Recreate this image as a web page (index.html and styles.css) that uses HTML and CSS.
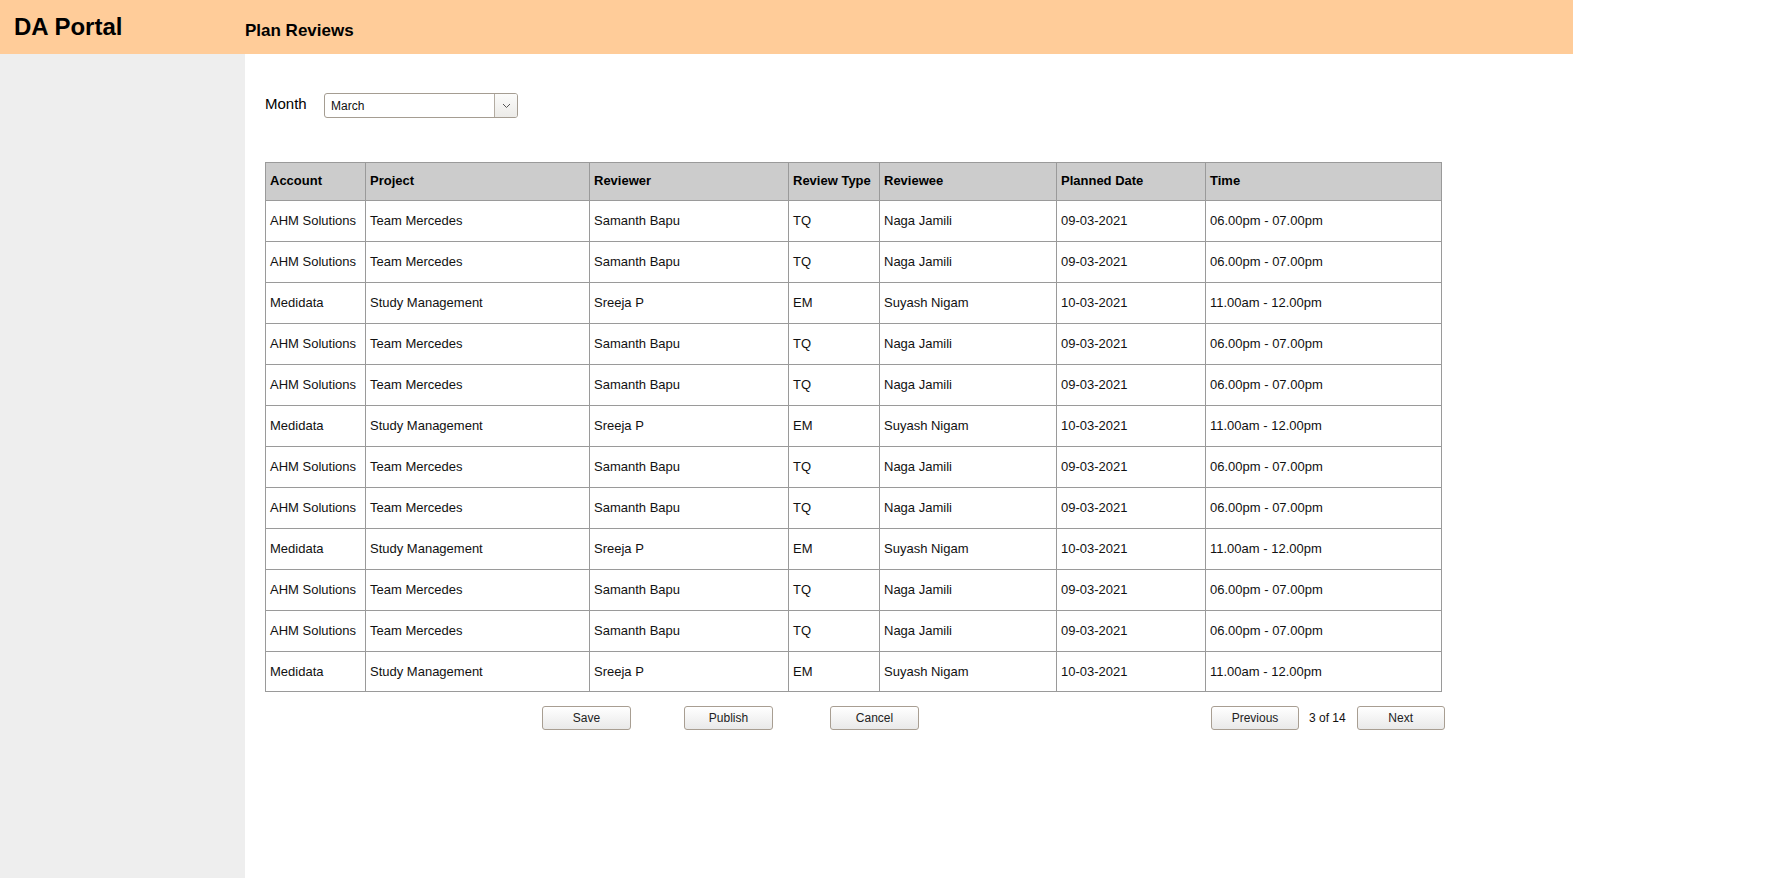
FILE: index.html
```html
<!DOCTYPE html>
<html>
<head>
<meta charset="utf-8">
<title>DA Portal - Plan Reviews</title>
<link rel="stylesheet" href="styles.css">
</head>
<body>
<header class="topbar">
  <div class="brand">DA Portal</div>
  <div class="page-title">Plan Reviews</div>
</header>
<div class="layout">
  <aside class="sidebar"></aside>
  <main class="content">
    <div class="filter-row">
      <span class="filter-label">Month</span>
      <div class="select">
        <span class="select-value">March</span>
        <span class="select-btn">
          <svg width="9" height="6" viewBox="0 0 9 6"><path d="M1 1 L4.5 4.5 L8 1" fill="none" stroke="#555" stroke-width="1"/></svg>
        </span>
      </div>
    </div>
    <table class="grid">
      <colgroup>
        <col class="c1"><col class="c2"><col class="c3"><col class="c4"><col class="c5"><col class="c6"><col class="c7">
      </colgroup>
      <thead>
        <tr class="head">
          <th>Account</th><th>Project</th><th>Reviewer</th><th>Review Type</th><th>Reviewee</th><th>Planned Date</th><th>Time</th>
        </tr>
      </thead>
      <tbody>
        <tr><td>AHM Solutions</td><td>Team Mercedes</td><td>Samanth Bapu</td><td>TQ</td><td>Naga Jamili</td><td>09-03-2021</td><td>06.00pm - 07.00pm</td></tr>
        <tr><td>AHM Solutions</td><td>Team Mercedes</td><td>Samanth Bapu</td><td>TQ</td><td>Naga Jamili</td><td>09-03-2021</td><td>06.00pm - 07.00pm</td></tr>
        <tr><td>Medidata</td><td>Study Management</td><td>Sreeja P</td><td>EM</td><td>Suyash Nigam</td><td>10-03-2021</td><td>11.00am - 12.00pm</td></tr>
        <tr><td>AHM Solutions</td><td>Team Mercedes</td><td>Samanth Bapu</td><td>TQ</td><td>Naga Jamili</td><td>09-03-2021</td><td>06.00pm - 07.00pm</td></tr>
        <tr><td>AHM Solutions</td><td>Team Mercedes</td><td>Samanth Bapu</td><td>TQ</td><td>Naga Jamili</td><td>09-03-2021</td><td>06.00pm - 07.00pm</td></tr>
        <tr><td>Medidata</td><td>Study Management</td><td>Sreeja P</td><td>EM</td><td>Suyash Nigam</td><td>10-03-2021</td><td>11.00am - 12.00pm</td></tr>
        <tr><td>AHM Solutions</td><td>Team Mercedes</td><td>Samanth Bapu</td><td>TQ</td><td>Naga Jamili</td><td>09-03-2021</td><td>06.00pm - 07.00pm</td></tr>
        <tr><td>AHM Solutions</td><td>Team Mercedes</td><td>Samanth Bapu</td><td>TQ</td><td>Naga Jamili</td><td>09-03-2021</td><td>06.00pm - 07.00pm</td></tr>
        <tr><td>Medidata</td><td>Study Management</td><td>Sreeja P</td><td>EM</td><td>Suyash Nigam</td><td>10-03-2021</td><td>11.00am - 12.00pm</td></tr>
        <tr><td>AHM Solutions</td><td>Team Mercedes</td><td>Samanth Bapu</td><td>TQ</td><td>Naga Jamili</td><td>09-03-2021</td><td>06.00pm - 07.00pm</td></tr>
        <tr><td>AHM Solutions</td><td>Team Mercedes</td><td>Samanth Bapu</td><td>TQ</td><td>Naga Jamili</td><td>09-03-2021</td><td>06.00pm - 07.00pm</td></tr>
        <tr class="last"><td>Medidata</td><td>Study Management</td><td>Sreeja P</td><td>EM</td><td>Suyash Nigam</td><td>10-03-2021</td><td>11.00am - 12.00pm</td></tr>
      </tbody>
    </table>
    <div class="actions">
      <button class="btn btn-save">Save</button>
      <button class="btn btn-publish">Publish</button>
      <button class="btn btn-cancel">Cancel</button>
      <button class="btn btn-prev">Previous</button>
      <span class="pager">3 of 14</span>
      <button class="btn btn-next">Next</button>
    </div>
  </main>
</div>
</body>
</html>
```
FILE: styles.css
```css
* { box-sizing: border-box; }
html, body {
  margin: 0;
  padding: 0;
  background: #fff;
  font-family: "Liberation Sans", Arial, sans-serif;
  color: #000;
}
.topbar {
  width: 1573px;
  height: 54px;
  background: #ffcc99;
  display: flex;
  align-items: flex-start;
}
.brand {
  width: 245px;
  padding-left: 14px;
  padding-top: 13px;
  font-size: 24px;
  font-weight: bold;
  line-height: 28px;
}
.page-title {
  padding-top: 21px;
  font-size: 17px;
  font-weight: bold;
  line-height: 20px;
}
.layout {
  display: flex;
  height: 824px;
}
.sidebar {
  width: 245px;
  flex: none;
  background: #eeeeee;
}
.content {
  flex: 1;
  padding-left: 20px;
  padding-top: 39px;
}
.filter-row {
  display: flex;
  align-items: center;
  height: 25px;
}
.filter-label {
  font-size: 15px;
  width: 59px;
  line-height: 18px;
  position: relative;
  top: -2px;
}
.select {
  width: 194px;
  height: 25px;
  border: 1px solid #a59d92;
  border-radius: 3px;
  background: #fff;
  display: flex;
  align-items: center;
}
.select-value {
  flex: 1;
  font-size: 12px;
  padding-left: 6px;
  padding-top: 1px;
  color: #111;
}
.select-btn {
  width: 23px;
  height: 23px;
  border-left: 1px solid #b3aca2;
  background: linear-gradient(#fbfbfa, #ecebe8);
  border-radius: 0 2px 2px 0;
  display: flex;
  align-items: center;
  justify-content: center;
}
.grid {
  margin-top: 44px;
  width: 1177px;
  table-layout: fixed;
  border-collapse: collapse;
  font-size: 13px;
}
.c1 { width: 100px; }
.c2 { width: 224px; }
.c3 { width: 199px; }
.c4 { width: 91px; }
.c5 { width: 177px; }
.c6 { width: 149px; }
.c7 { width: 236px; }
.grid th, .grid td {
  border: 1px solid #9a9a9a;
  padding: 0 4px 1px;
  text-align: left;
  white-space: nowrap;
  overflow: hidden;
}
.grid th {
  background: #cccccc;
  font-weight: bold;
  height: 38px;
  padding-bottom: 2px;
}
.grid td {
  height: 41px;
  color: #111;
}
.grid tr.last td { height: 40px; }
.actions {
  display: flex;
  align-items: center;
  margin-top: 14px;
  height: 24px;
}
.btn {
  width: 89px;
  height: 24px;
  padding: 0;
  font-family: "Liberation Sans", Arial, sans-serif;
  font-size: 12px;
  color: #222;
  border: 1px solid #a89e92;
  border-radius: 3px;
  background: linear-gradient(#ffffff, #e9e9e9);
}
.btn-save { margin-left: 277px; }
.btn-publish { margin-left: 53px; }
.btn-cancel { margin-left: 57px; }
.btn-prev { margin-left: 292px; width: 88px; }
.pager {
  font-size: 12px;
  margin-left: 10px;
  margin-right: 11px;
  color: #111;
}
.btn-next { width: 88px; }
```
